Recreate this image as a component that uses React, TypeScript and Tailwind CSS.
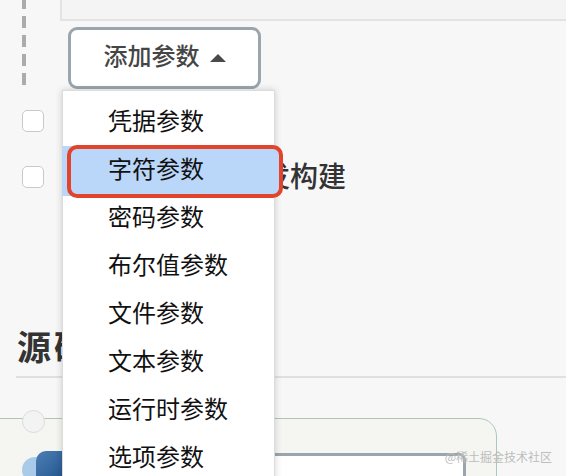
import React from 'react';

const paramTypes = ['凭据参数', '字符参数', '密码参数', '布尔值参数', '文件参数', '文本参数', '运行时参数', '选项参数'];

const Checkbox: React.FC = () => (
    <div className="w-[22px] h-[22px] shrink-0 rounded-[5px] border border-[#c9c9c9] bg-white" />
);

export default function App() {
    return (
        <div className="relative w-[566px] h-[476px] overflow-hidden bg-[#f7f7f7] font-['Noto_Sans_CJK_SC','Noto_Sans',sans-serif]">
            {/* Top: previous parameter block + add button */}
            <div className="flex h-[89px]">
                <div className="w-[60px] shrink-0">
                    <div className="ml-[22px] w-[4px] h-[88px] bg-[repeating-linear-gradient(to_bottom,#ababab_0_9px,transparent_9px_16px,#ababab_16px_19px)]" />
                </div>
                <div className="flex-1 flex flex-col">
                    <div className="h-[21px] bg-[#f4f4f4] border-l-2 border-b-2 border-[#e3e3e3]" />
                    <button className="mt-[6px] ml-[8px] w-[193px] h-[62px] flex items-center justify-center gap-[10px] bg-white border-[3px] border-[#9ba5ad] rounded-[9px] text-[24px] leading-none font-medium text-[#454545]">
                        <span className="pb-[7px]">添加参数</span>
                        <svg width="16" height="8" viewBox="0 0 16 8" className="mb-[1px]">
                            <path d="M0 8 L8 0 L16 8 Z" fill="#4a4a4a" />
                        </svg>
                    </button>
                </div>
            </div>

            {/* Option checkboxes */}
            <div className="mt-[10px] h-[44px] flex items-center pl-[22px] gap-[22px]">
                <Checkbox />
                <span className="text-[28px] leading-none pb-[4px] font-medium text-[#333]">参数化构建过程</span>
            </div>
            <div className="mt-[12px] h-[44px] flex items-center pl-[22px] gap-[22px]">
                <Checkbox />
                <span className="text-[28px] leading-none pb-[4px] font-medium text-[#333]">在必要的时候并发构建</span>
            </div>

            {/* Source code section */}
            <div className="mt-[127px] ml-[16px] pl-[1px] pb-[10px] border-b-2 border-[#e0e0e0]">
                <h2 className="text-[34px] leading-[40px] tracking-[3px] font-bold text-[#333]">源码管理</h2>
            </div>

            <div className="mt-[40px] -ml-[10px] w-[507px] h-[80px] rounded-tr-[18px] border-[1.5px] border-[#abc8b7] bg-[#f5f5f2]">
                <div className="-mt-[9px] ml-[31px] w-[23px] h-[23px] rounded-full border border-[#dcdcdc] bg-[#f3f3f3]" />
                <div className="mt-[18px] ml-[31px] flex items-start gap-[15px]">
                    <div className="relative w-[38px] h-[30px]">
                        <div className="absolute left-0 top-[6px] w-[26px] h-[26px] rounded-full bg-[#a9cbe9]" />
                        <div className="absolute left-[14px] top-0 w-[26px] h-[30px] rounded-tl-[10px] bg-[linear-gradient(135deg,#4d7fb4,#23568f)]" />
                    </div>
                    <div className="mt-[2px] w-[391px] h-[30px] bg-white border-[3px] border-[#9ba5ad] rounded-tr-[7px]" />
                </div>
            </div>

            {/* Dropdown menu */}
            <div className="absolute left-[62px] top-[90px] w-[213px] h-[400px] bg-white border border-[#dcdcdc] shadow-[0_0_7px_rgba(0,0,0,0.18)] pt-[7px]">
                {paramTypes.map((label, i) => (
                    <div key={label} className="relative h-[48px] flex items-center pl-[45px] text-[24px] leading-none text-[#111]">
                        {i === 1 && (
                            <>
                                <div className="absolute -left-[1px] top-0 w-[217px] h-[50px] bg-[#bad6f8]" />
                                <div className="absolute left-[4px] -top-[1px] w-[216px] h-[53px] border-[4px] border-[#e2432b] rounded-[10px]" />
                            </>
                        )}
                        <span className="relative pb-[5px]">{label}</span>
                    </div>
                ))}
            </div>

            {/* Watermark */}
            <div className="absolute right-[14px] top-[448px] text-[12px] text-[#bdbdbd]">@稀土掘金技术社区</div>
        </div>
    );
}
